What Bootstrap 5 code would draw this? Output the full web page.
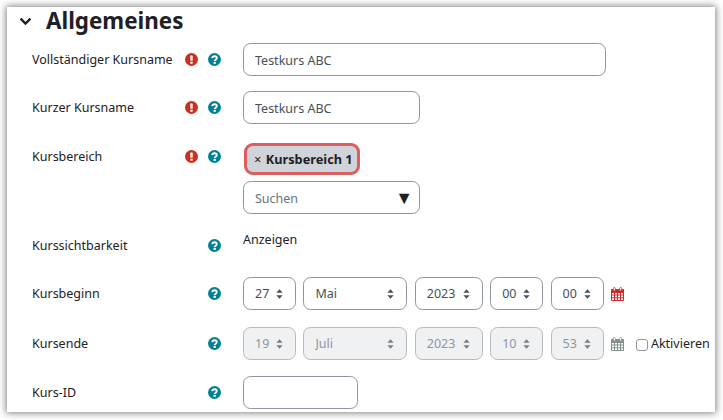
<!DOCTYPE html>
<html lang="de">
<head>
<meta charset="utf-8">
<title>Allgemeines</title>
<link href="https://cdn.jsdelivr.net/npm/bootstrap@5.3.0/dist/css/bootstrap.min.css" rel="stylesheet">
<style>
html,body{height:420px;overflow:hidden}
body{background:#fff;padding:7px 8px 8px 7px;font-family:"Noto Sans","Open Sans",sans-serif;font-size:12.5px;color:#1d2125}
.sheet{height:405px;box-shadow:0 0 7px 1px rgba(0,0,0,.5);padding:0 4px 0 12px}
.sheet-head{height:28px;margin-bottom:8px;gap:14px;color:#1d2125}
.sheet-head h2{font-size:22.4px;font-weight:700;margin:0;line-height:28px;font-family:"Noto Sans",sans-serif}
.fld{display:flex;align-items:flex-start;margin-bottom:16px}
.fld-t{margin-bottom:15px}
.fld-x{margin-bottom:17px}
.fld-s{height:48px;margin-bottom:0}
.fld-lbl{width:224px;padding-left:13px;height:33px;display:flex;align-items:center;flex:none}
.lbl-txt{width:153px;flex:none;padding-top:2px}
.ic{width:13px;height:13px;flex:none;display:block}
.ic-gap{margin-left:10px}
.ic-slot{width:13px;flex:none}
.form-control.mdl,.form-select.mdl{height:33px;min-height:33px;border-color:#8f959e;border-radius:7.5px;font-size:12.5px;color:#495057;padding:2px 11px 0;box-shadow:none;flex:none}
.w-a{width:363px}.w-b{width:177px}.w-c{width:115px}
.form-select.mdl{background-image:url("data:image/svg+xml,%3Csvg xmlns='http://www.w3.org/2000/svg' viewBox='0 0 8 11'%3E%3Cpath fill='%23495057' d='M4 0l3.6 4H.4zM4 11L.4 7h7.2z'/%3E%3C/svg%3E");background-size:7px 10px;background-position:right 12px center;padding-right:20px}
.form-select.mdl:disabled{background-image:url("data:image/svg+xml,%3Csvg xmlns='http://www.w3.org/2000/svg' viewBox='0 0 8 11'%3E%3Cpath fill='%23777d85' d='M4 0l3.6 4H.4zM4 11L.4 7h7.2z'/%3E%3C/svg%3E");background-color:#eff1f3;color:#8f959e;border-color:#b5b9be;opacity:1}
.s-d{width:53px}.s-m{width:104px}.s-y{width:68px}
.dates{gap:7.4px;flex:none}
.cal{width:13px;height:14px;flex:none}
.cal-r{color:#cf2a2a}
.cal-g{color:#84908a}
.chip{display:inline-block;background:#ced4da;outline:3px solid #dc5e5e;outline-offset:-3px;border-radius:9px;padding:0 7px 0 10px;height:32px;line-height:33px;font-weight:700;font-size:12.75px;margin:3px 0 6px 1px}
.chip-x{font-weight:400;font-size:13px;margin-right:1px}
.srch{width:177px}
.srch-arrow{position:absolute;right:7px;top:0;height:33px;line-height:33px;font-size:18px;color:#1d2125}
.srch input::placeholder{color:#6a737b;opacity:1}
.static-v{line-height:20px;margin-top:1px}
.form-check .chk{width:12px;height:12px;margin:0 3px 0 0;border-color:#8f959e;border-radius:3px;float:none;flex:none}
.chk-wrap{margin-left:4.6px;height:33px;margin-bottom:0;padding:2px 0 0;min-height:0}
</style>
</head>
<body>
<svg width="0" height="0" class="position-absolute">
<symbol id="i-warn" viewBox="0 0 14 14"><circle cx="7" cy="7" r="7" fill="#ca3120"/><rect x="5.7" y="2.6" width="2.6" height="5.8" rx=".6" fill="#fff"/><rect x="5.7" y="9.3" width="2.6" height="2.3" rx=".5" fill="#fff"/></symbol>
<symbol id="i-help" viewBox="0 0 14 14"><circle cx="7" cy="7" r="7" fill="#008196"/><path d="M4.5 5.4C4.7 4 5.8 3.5 7 3.5c1.4 0 2.5.8 2.5 2 0 1.7-2.3 1.6-2.3 3" fill="none" stroke="#fff" stroke-width="1.9"/><rect x="6" y="9.5" width="2.4" height="2.2" fill="#fff"/></symbol>
<symbol id="i-cal" viewBox="0 0 13 14"><path fill="none" stroke="currentColor" d="M.5 2.5h12v11H.5zM.5 5.5h12M.5 8h12M.5 10.8h12M3.5 5.5v8M6.5 5.5v8M9.5 5.5v8"/><path fill="currentColor" d="M.5 2h12v3.5H.5z"/><rect x="2.3" y=".5" width="2" height="3.5" rx="1" fill="#fff" stroke="currentColor" stroke-width=".8"/><rect x="8.7" y=".5" width="2" height="3.5" rx="1" fill="#fff" stroke="currentColor" stroke-width=".8"/></symbol>
</svg>
<div class="card sheet border-0 rounded-0">
  <div class="d-flex align-items-center sheet-head">
    <svg width="13" height="9" viewBox="0 0 13 9" aria-hidden="true"><path d="M1.6 1.6 6.5 6.5l4.9-4.9" fill="none" stroke="#1d2125" stroke-width="2.4"/></svg>
    <h2>Allgemeines</h2>
  </div>

  <div class="fld fld-t">
    <div class="fld-lbl"><span class="lbl-txt">Vollständiger Kursname</span><svg class="ic"><use href="#i-warn"/></svg><svg class="ic ic-gap"><use href="#i-help"/></svg></div>
    <input class="form-control mdl w-a" type="text" value="Testkurs ABC">
  </div>
  <div class="fld">
    <div class="fld-lbl"><span class="lbl-txt">Kurzer Kursname</span><svg class="ic"><use href="#i-warn"/></svg><svg class="ic ic-gap"><use href="#i-help"/></svg></div>
    <input class="form-control mdl w-b" type="text" value="Testkurs ABC">
  </div>
  <div class="fld fld-t">
    <div class="fld-lbl"><span class="lbl-txt">Kursbereich</span><svg class="ic"><use href="#i-warn"/></svg><svg class="ic ic-gap"><use href="#i-help"/></svg></div>
    <div>
      <span class="chip"><span class="chip-x">×</span> Kursbereich 1</span>
      <div class="position-relative srch">
        <input class="form-control mdl w-b" type="text" placeholder="Suchen">
        <span class="srch-arrow">▼</span>
      </div>
    </div>
  </div>
  <div class="fld fld-s">
    <div class="fld-lbl"><span class="lbl-txt">Kurssichtbarkeit</span><span class="ic-slot"></span><svg class="ic ic-gap"><use href="#i-help"/></svg></div>
    <div class="static-v">Anzeigen</div>
  </div>
  <div class="fld fld-x">
    <div class="fld-lbl"><span class="lbl-txt">Kursbeginn</span><span class="ic-slot"></span><svg class="ic ic-gap"><use href="#i-help"/></svg></div>
    <div class="d-flex align-items-center dates">
      <select class="form-select mdl s-d"><option>27</option></select>
      <select class="form-select mdl s-m"><option>Mai</option></select>
      <select class="form-select mdl s-y"><option>2023</option></select>
      <select class="form-select mdl s-d"><option>00</option></select>
      <select class="form-select mdl s-d"><option>00</option></select>
      <svg class="cal cal-r"><use href="#i-cal"/></svg>
    </div>
  </div>
  <div class="fld">
    <div class="fld-lbl"><span class="lbl-txt">Kursende</span><span class="ic-slot"></span><svg class="ic ic-gap"><use href="#i-help"/></svg></div>
    <div class="d-flex align-items-center dates">
      <select class="form-select mdl s-d" disabled><option>19</option></select>
      <select class="form-select mdl s-m" disabled><option>Juli</option></select>
      <select class="form-select mdl s-y" disabled><option>2023</option></select>
      <select class="form-select mdl s-d" disabled><option>10</option></select>
      <select class="form-select mdl s-d" disabled><option>53</option></select>
      <svg class="cal cal-g"><use href="#i-cal"/></svg>
      <label class="form-check d-flex align-items-center chk-wrap"><input class="form-check-input chk" type="checkbox">Aktivieren</label>
    </div>
  </div>
  <div class="fld mb-0">
    <div class="fld-lbl"><span class="lbl-txt">Kurs-ID</span><span class="ic-slot"></span><svg class="ic ic-gap"><use href="#i-help"/></svg></div>
    <input class="form-control mdl w-c" type="text">
  </div>
</div>
</body>
</html>
